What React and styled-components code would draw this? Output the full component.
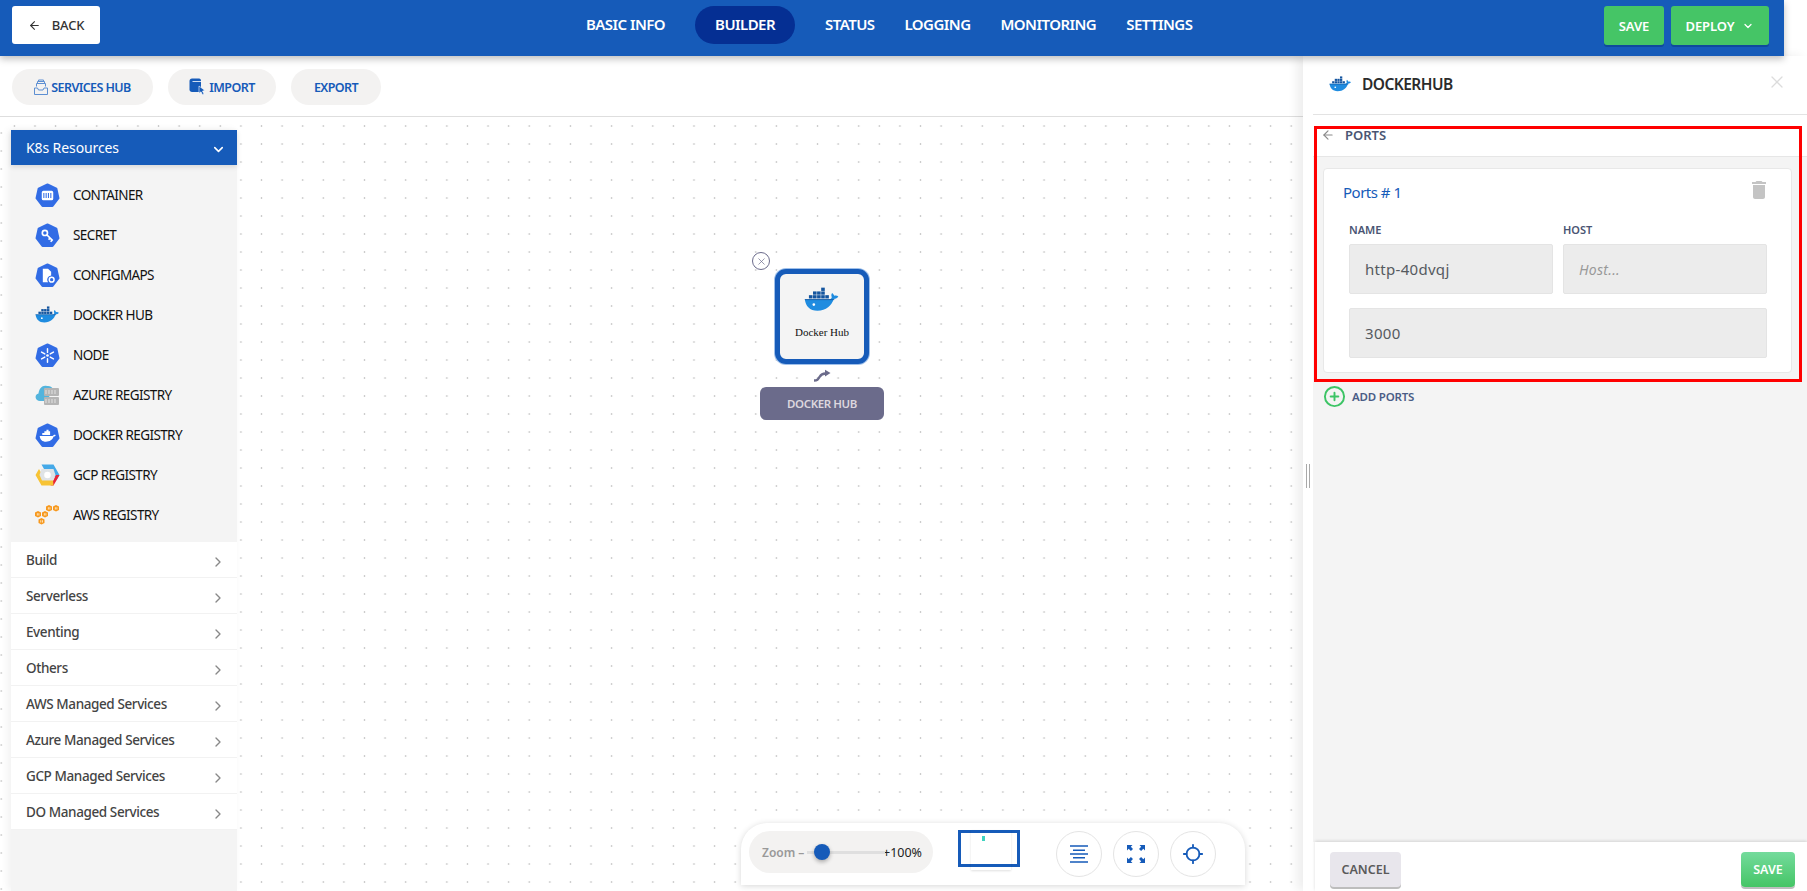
import React from 'react'
import styled, { createGlobalStyle } from 'styled-components'
import { ArrowLeft, ChevronDown, ChevronRight, X, CirclePlus, Locate } from 'lucide-react'
import { MdDelete } from 'react-icons/md'

const BLUE = '#165bb9'
const FONT = '"Noto Sans", "Open Sans", sans-serif'
const DOTS = 'radial-gradient(circle, #cbcbcb 0.85px, transparent 1.15px)'

const GlobalStyle = createGlobalStyle`
    html, body {
        margin: 0;
        height: 100%;
        overflow: hidden;
        background: #ffffff;
        font-family: ${FONT};
    }
    * {
        box-sizing: border-box;
    }
`

const Page = styled.div`
    width: 1807px;
    height: 891px;
    display: flex;
    flex-direction: column;
    overflow: hidden;
`

const Header = styled.header`
    position: relative;
    z-index: 5;
    flex: none;
    width: 1784px;
    height: 56px;
    padding: 6px 15px 0 12px;
    display: flex;
    align-items: flex-start;
    background: ${BLUE};
    box-shadow: 0 3px 7px rgba(0, 0, 0, 0.25);
`

const BackButton = styled.button`
    width: 88px;
    height: 38px;
    border: 0;
    border-radius: 3px;
    background: #ffffff;
    color: #333333;
    font: 500 13px ${FONT};
    letter-spacing: -0.2px;
    display: flex;
    align-items: center;
    justify-content: center;
    gap: 11px;
`

const Nav = styled.nav`
    margin-left: 486px;
    display: flex;
    gap: 30px;
`

const NavItem = styled.div`
    height: 38px;
    padding: 0 ${(p) => (p.$active ? '20px' : '0')};
    border-radius: 19px;
    background: ${(p) => (p.$active ? '#052f93' : 'transparent')};
    color: #ffffff;
    font-size: 15px;
    font-weight: 600;
    letter-spacing: -0.55px;
    line-height: 37px;
`

const Actions = styled.div`
    margin-left: auto;
    display: flex;
    gap: 7px;
`

const GreenButton = styled.button`
    width: ${(p) => p.$w}px;
    height: 39px;
    border: 0;
    border-radius: 3px;
    background: #45c566;
    box-shadow: 0 2px 0 #0f4a9c;
    color: #ffffff;
    font: 600 13px ${FONT};
    letter-spacing: -0.1px;
    display: flex;
    align-items: center;
    justify-content: center;
    gap: 8px;
`

const Main = styled.div`
    flex: 1;
    min-height: 0;
    display: flex;
`

const Workspace = styled.div`
    width: 1303px;
    display: flex;
    flex-direction: column;
`

const Toolbar = styled.div`
    flex: none;
    height: 61px;
    padding: 13px 12px 0;
    display: flex;
    align-items: flex-start;
    gap: 15px;
    border-bottom: 1px solid #dedede;
`

const PillButton = styled.button`
    width: ${(p) => p.$w}px;
    height: 36px;
    border: 0;
    border-radius: 18px;
    background: #f3f2f1;
    color: ${BLUE};
    font: 600 12.5px ${FONT};
    letter-spacing: -0.6px;
    display: flex;
    align-items: center;
    justify-content: center;
    gap: 3px;
`

const Canvas = styled.div`
    position: relative;
    flex: 1;
    min-height: 0;
    padding-top: 13px;
    display: flex;
    background-image: ${DOTS};
    background-size: 20.6px 18px;
    background-position: 4.1px 0;
`

const Strip = styled.div`
    flex: none;
    width: 11px;
    margin-top: -13px;
    background-color: #ffffff;
    background-image: ${DOTS};
    background-size: 20.6px 18px;
    background-position: -9.1px 7px;
`

const Sidebar = styled.aside`
    flex: none;
    width: 226px;
    display: flex;
    flex-direction: column;
    background: #f4f4f4;
    box-shadow: -3px 0 8px rgba(0, 0, 0, 0.06);
`

const SideHead = styled.div`
    flex: none;
    height: 35px;
    padding: 0 11px 0 15px;
    display: flex;
    align-items: center;
    justify-content: space-between;
    background: ${BLUE};
    color: #ffffff;
    font-size: 14px;
    letter-spacing: -0.1px;
    box-shadow: 0 2px 5px rgba(0, 0, 0, 0.12);

    svg {
        margin-top: 4px;
    }
`

const ResourceList = styled.div`
    padding: 10px 0 7px 24px;
`

const ResourceItem = styled.div`
    height: 40px;
    display: flex;
    align-items: center;
    gap: 13px;
    color: #111111;
    font-size: 13.5px;
    letter-spacing: -0.6px;
`

const IconSlot = styled.span`
    width: 25px;
    height: 26px;
    display: flex;
    align-items: center;
    justify-content: center;
`

const SectionRow = styled.div`
    height: 36px;
    padding: 0 11px 0 15px;
    display: flex;
    align-items: center;
    justify-content: space-between;
    background: #ffffff;
    border-bottom: 1px solid #f2f2f2;
    color: #444444;
    font-size: 13.5px;
    font-weight: 500;
    letter-spacing: -0.4px;

    svg {
        margin-top: 5px;
        color: #888888;
    }
`

const NodeGroup = styled.div`
    position: absolute;
    left: 760px;
    top: 135px;
    width: 124px;
    display: flex;
    flex-direction: column;
    align-items: center;
`

const NodeClose = styled.span`
    position: absolute;
    left: -8px;
    top: 0;
    width: 18px;
    height: 18px;
    border: 1px solid #6b6b8b;
    border-radius: 50%;
    display: flex;
    align-items: center;
    justify-content: center;
    color: #6b6b8b;
    background: #ffffff;
`

const NodeCard = styled.div`
    margin-top: 17px;
    width: 94px;
    height: 95px;
    border: 5px solid ${BLUE};
    border-radius: 11px;
    background: #f4f4f4;
    box-shadow: 0 0 0 1px #9fc0ea;
    display: flex;
    flex-direction: column;
    align-items: center;
    padding-top: 13px;
`

const NodeTitle = styled.div`
    margin-top: 14px;
    font: 11px "Liberation Serif", serif;
    color: #111111;
`

const Connector = styled.div`
    height: 23px;
    display: flex;
    align-items: center;
    justify-content: center;
`

const NodeLabel = styled.div`
    width: 124px;
    height: 33px;
    border-radius: 6px;
    background: #6b6b8b;
    color: #dcd6de;
    font-size: 11.5px;
    font-weight: 600;
    letter-spacing: -0.4px;
    display: flex;
    align-items: center;
    justify-content: center;
`

const ZoomBar = styled.div`
    position: absolute;
    left: 741px;
    bottom: 6px;
    width: 504px;
    height: 62px;
    padding: 8px 29px 0 8px;
    display: flex;
    align-items: flex-start;
    background: #ffffff;
    border-radius: 26px 26px 0 0;
    box-shadow: 0 1px 6px rgba(0, 0, 0, 0.16);
`

const ZoomPill = styled.div`
    width: 184px;
    height: 42px;
    padding: 0 11px 0 13px;
    border-radius: 21px;
    background: #f3f2f1;
    display: flex;
    align-items: center;
    font-size: 12px;
`

const ZoomLabel = styled.span`
    color: #999999;
    font-weight: 600;
    white-space: nowrap;
`

const Track = styled.div`
    position: relative;
    width: 81px;
    height: 3px;
    margin-left: 3px;
    background: #dfdfdf;
`

const Thumb = styled.span`
    position: absolute;
    left: 7px;
    top: -7px;
    width: 16px;
    height: 16px;
    border-radius: 50%;
    background: ${BLUE};
    box-shadow: 0 2px 4px rgba(0, 0, 0, 0.3);
`

const ZoomValue = styled.span`
    margin-left: -2px;
    color: #222222;
    font-size: 12.5px;
`

const MiniMap = styled.div`
    position: relative;
    margin: -1px 0 0 25px;
    width: 62px;
    height: 37px;
    border: 3px solid ${BLUE};
`

const MiniSheet = styled.div`
    position: absolute;
    left: 10px;
    top: -3px;
    width: 40px;
    height: 40px;
    box-shadow: 0 1px 2px rgba(0, 0, 0, 0.12);
`

const MiniDot = styled.span`
    position: absolute;
    left: 11px;
    top: 6px;
    width: 3px;
    height: 5px;
    background: #3fd3c0;
`

const RoundButtons = styled.div`
    margin-left: auto;
    display: flex;
    gap: 11px;
`

const RoundButton = styled.button`
    width: 46px;
    height: 46px;
    padding: 0;
    border: 1px solid #e4e4e4;
    border-radius: 50%;
    background: #ffffff;
    color: ${BLUE};
    display: flex;
    align-items: center;
    justify-content: center;
`

const Panel = styled.section`
    position: relative;
    z-index: 2;
    flex: 1;
    padding-left: 10px;
    display: flex;
    flex-direction: column;
    background: #ffffff;
    box-shadow: -6px 0 10px rgba(0, 0, 0, 0.07);
`

const Handle = styled.span`
    position: absolute;
    left: 3px;
    top: 408px;
    width: 4px;
    height: 24px;
    border-left: 1px solid #a9a9a9;
    border-right: 1px solid #a9a9a9;
`

const PanelHead = styled.div`
    flex: none;
    height: 59px;
    padding: 0 20px 2px 16px;
    display: flex;
    align-items: center;
    border-bottom: 1px solid #e3e3e3;
`

const PanelTitle = styled.h2`
    margin: 0 0 0 10px;
    color: #2b2b2b;
    font-size: 15.5px;
    font-weight: 600;
    letter-spacing: -0.55px;
`

const PanelClose = styled.span`
    margin: -4px 0 0 auto;
    color: #dcdcdc;
    display: flex;
`

const PanelBody = styled.div`
    flex: 1;
    min-height: 0;
    background: #f4f4f4;
`

const SubHead = styled.div`
    height: 42px;
    padding: 0 0 2px 8px;
    display: flex;
    align-items: center;
    gap: 10px;
    background: #ffffff;
    border-bottom: 1px solid #e6e6e6;
    color: #4a5573;
    font-size: 13px;
    font-weight: 600;

    svg {
        color: #8a8a8a;
    }
`

const Card = styled.div`
    height: 205px;
    margin: 11px 15px 0 10px;
    border: 1px solid #e8e8e8;
    border-radius: 4px;
    background: #ffffff;
`

const CardHead = styled.div`
    height: 50px;
    padding: 0 24px 4px 19px;
    display: flex;
    align-items: center;
    justify-content: space-between;
`

const CardTitle = styled.div`
    color: ${BLUE};
    font-size: 15px;
    letter-spacing: -0.5px;
`

const TrashIcon = styled.span`
    margin: -4px -4px 0 0;
    color: #c4c4c4;
    display: flex;
`

const FieldGrid = styled.div`
    padding: 0 24px 0 25px;
    display: grid;
    grid-template-columns: 1fr 1fr;
    column-gap: 10px;
    row-gap: 14px;
`

const Field = styled.div`
    grid-column: ${(p) => (p.$full ? '1 / -1' : 'auto')};
`

const FieldLabel = styled.label`
    display: block;
    height: 25px;
    color: #4a5573;
    font-size: 11px;
    font-weight: 600;
    line-height: 21px;
`

const Input = styled.input`
    display: block;
    width: 100%;
    height: 50px;
    padding: 0 15px;
    border: 1px solid #e4e4e4;
    border-radius: 2px;
    outline: none;
    background: #ececec;
    color: #555a60;
    font: 15px ${FONT};
    letter-spacing: 0.3px;

    &::placeholder {
        color: #999999;
        font-size: 14px;
        font-style: italic;
    }
`

const AddRow = styled.div`
    margin: 13px 0 0 10px;
    height: 20px;
    display: flex;
    align-items: center;
    gap: 6px;
    color: #4a5d86;
    font-size: 11.5px;
    font-weight: 600;
    letter-spacing: -0.2px;

    svg {
        color: #3cc465;
    }
`

const Footer = styled.div`
    flex: none;
    height: 49px;
    margin-left: 2px;
    padding: 10px 12px 0 15px;
    display: flex;
    align-items: flex-start;
    justify-content: space-between;
    background: #ffffff;
    box-shadow: 0 -1px 3px rgba(0, 0, 0, 0.14);
`

const CancelButton = styled.button`
    width: 71px;
    height: 35px;
    border: 0;
    border-radius: 4px;
    background: #e8e6ec;
    box-shadow: 0 2px 0 #bdbdbd;
    color: #5a5a5a;
    font: 600 12.5px ${FONT};
`

const SaveButton = styled.button`
    width: 54px;
    height: 35px;
    border: 0;
    border-radius: 4px;
    background: linear-gradient(180deg, #74db9c, #45c566);
    box-shadow: 0 2px 0 #bdbdbd;
    color: #ffffff;
    font: 600 12.5px ${FONT};
`

const Highlight = styled.div`
    position: absolute;
    left: 11px;
    top: 70px;
    width: 488px;
    height: 256px;
    border: 3px solid #ff0000;
    pointer-events: none;
`

const Hept = ({ children, size = 25 }) => (
    <svg width={size} height={size} viewBox="0 0 24 24">
        <polygon
            points="12,1.5 20.5,5.5 22.5,14.5 16.8,22 7.2,22 1.5,14.5 3.5,5.5"
            fill="#326ce5"
            stroke="#326ce5"
            strokeWidth="2"
            strokeLinejoin="round"
        />
        {children}
    </svg>
)

const DockerWhale = ({ width = 30, shade = '#1f8ce0', dark = '#14559f' }) => (
    <svg width={width} height={(width * 30) / 44} viewBox="0 0 44 30">
        <g fill={dark}>
            <rect x="6" y="10" width="4.4" height="4" />
            <rect x="11" y="10" width="4.4" height="4" />
            <rect x="16" y="10" width="4.4" height="4" />
            <rect x="21" y="10" width="4.4" height="4" />
            <rect x="26" y="10" width="4.4" height="4" />
            <rect x="11" y="5.4" width="4.4" height="4" />
            <rect x="16" y="5.4" width="4.4" height="4" />
            <rect x="21" y="5.4" width="4.4" height="4" />
            <rect x="21" y="0.8" width="4.4" height="4" />
        </g>
        <path
            d="M1 15h30c1.5-.2 2.7-1 3-2.8-.8-1.4-.8-3.4.4-5 1.5 1 2.3 2.3 2.5 3.6 1.8-.6 3.8-.3 5.1.9-1 2-3.2 3-5.6 3C34 22.500 27 29 16.500 29 7 29 2 23.500 1 15z"
            fill={shade}
        />
        <rect x="1" y="15" width="36" height="1" fill={dark} />
        <circle cx="12" cy="21.500" r="1.600" fill="#ffffff" />
    </svg>
)

const ContainerIcon = () => (
    <Hept>
        <rect x="6.500" y="7.500" width="11" height="9" rx="1.500" fill="#ffffff" />
        <path d="M8.500 9.500v5M10.700 9.500v5M12.900 9.500v5M15.200 9.500v5" stroke="#326ce5" strokeWidth="1" />
    </Hept>
)

const SecretIcon = () => (
    <Hept>
        <circle cx="9.500" cy="9.500" r="2.500" fill="none" stroke="#ffffff" strokeWidth="1.600" />
        <path d="M11.300 11.300l5.700 5.700M14.500 14.500l-1.500 1.500M16.500 16.500l-1.500 1.500" stroke="#ffffff" strokeWidth="1.600" />
    </Hept>
)

const ConfigIcon = () => (
    <Hept>
        <path d="M7.500 5.500h5l3 3v3.500a4 4 0 0 0-3 6.500h-5z" fill="#ffffff" />
        <circle cx="16" cy="16" r="2.300" fill="none" stroke="#ffffff" strokeWidth="1.400" />
    </Hept>
)

const NodeIcon = () => (
    <Hept>
        <g stroke="#ffffff" strokeWidth="1.400" strokeLinecap="round">
            <path d="M12 5.500v3.500M12 15v3.500M6.300 8.700l3.100 1.800M14.600 13.500l3.100 1.800M6.300 15.300l3.100-1.800M14.600 10.500l3.100-1.800" />
        </g>
        <circle cx="12" cy="12" r="1.300" fill="#ffffff" />
    </Hept>
)

const DockerRegistryIcon = () => (
    <Hept>
        <path
            d="M4.500 12.500h12c.7 0 1.200-.4 1.400-1 .7-.3 1.500-.2 2 .2-.4.9-1.200 1.300-2 1.300-1 3-3.800 5-7.400 5-3.400 0-5.600-2-6-5.500z"
            fill="#ffffff"
        />
        <path d="M7 11.500V9.500h2V8h2V6.500h2V8h1.500v3.500z" fill="#ffffff" />
    </Hept>
)

const AzureIcon = () => (
    <svg width="25" height="24" viewBox="0 0 25 24">
        <path d="M2 17c-2.500-2-1.500-6 1.500-6.500C4 5 8 1.500 12 3c2-.5 5 .5 6 3l-6 12H5c-1.200 0-2.200-.4-3-1z" fill="#53b4dd" />
        <g fill="#b5b5b5">
            <rect x="9" y="5" width="15" height="8" rx="1" />
            <rect x="9" y="14" width="15" height="8" rx="1" />
        </g>
        <path d="M11 7v4M14 7v4M17 7v4M20 7v4M11 16v4M14 16v4M17 16v4M20 16v4" stroke="#e2e2e2" strokeWidth="1" />
    </svg>
)

const GcpIcon = () => (
    <svg width="25" height="22" viewBox="0 0 25 22">
        <path d="M6.500 0.500h12L24.500 11l-3 5.500-4-7-2.500-4.500H9z" fill="#45a9e8" />
        <path d="M24.500 11l-6 10.500h-3l3-5.500 2.500-5z" fill="#ea2436" />
        <path d="M18.500 21.500h-12L0.500 11 4 5l4 7 2 4h8z" fill="#f7c334" />
        <path d="M6.500 5h12l2 6-2.500 5.500H7L4.500 11z" fill="#dfe3e6" />
        <circle cx="12.500" cy="11" r="3.300" fill="#ffffff" />
    </svg>
)

const Cube = ({ x, y }) => (
    <g transform={`translate(${x} ${y})`}>
        <path d="M0 1.600L3 0l3 1.600v3.300L3 6.500 0 4.900z" fill="#f7981d" />
        <path d="M1.900 2.200h.8v2.400h-.8zM3.500 2.200h.8v2.400h-.8z" fill="#fff3dc" />
    </g>
)

const AwsIcon = () => (
    <svg width="25" height="20" viewBox="0 0 25 20">
        <Cube x="11" y="0" />
        <Cube x="18" y="0" />
        <Cube x="0" y="6" />
        <Cube x="7" y="6" />
        <Cube x="3.500" y="13" />
    </svg>
)

const HubIcon = () => (
    <svg width="14" height="16" viewBox="0 0 14 16" fill="none" stroke="#5d8fd2" strokeWidth="1">
        <path d="M0.500 9v6.500h13V9h-3.500l-1 2H4.500l-1-2z" />
        <path d="M2.500 7.500v-3h9v3M3.500 4.500v-2h7v2M4.500 2.500V1h5v1.500" />
    </svg>
)

const ImportIcon = () => (
    <svg width="17" height="18" viewBox="0 0 17 18">
        <path d="M0.500 3c0-1.500 1-2.500 2.500-2.500h7c1.500 0 2 1 2 2.500v11H3c-1.500 0-2.500-1-2.500-2.500z" fill="#165bb9" />
        <path d="M3.500 3.500h9" stroke="#ffffff" strokeWidth="0.800" />
        <path d="M10 8l6 4.500-2.500.5 1.500 3-1.500.8-1.500-3-2 1.500z" fill="#165bb9" stroke="#ffffff" strokeWidth="0.600" />
    </svg>
)

const LinkIcon = () => (
    <svg width="18" height="13" viewBox="0 0 18 13" fill="none">
        <path d="M1 11.500c3.500 0 4-1 5.500-3.500s2.500-3.500 6-3.500" stroke="#6b6b8b" strokeWidth="2.400" />
        <path d="M12 0.800l5.500 3.200L12 7.500z" fill="#6b6b8b" />
    </svg>
)

const AlignIcon = () => (
    <svg width="18" height="18" viewBox="0 0 18 18" fill="none" stroke="currentColor" strokeWidth="1.600">
        <path d="M0 1h18M3 5.300h12M0 9h18M3 12.700h12M0 17h18" />
    </svg>
)

const ExpandIcon = () => (
    <svg width="18" height="18" viewBox="0 0 18 18" fill="currentColor">
        <path d="M0 0h5.500L3.800 1.700 6 3.900 3.900 6 1.700 3.800 0 5.500z" />
        <path d="M18 0v5.500l-1.700-1.700L14.100 6 12 3.900l2.200-2.200L12.500 0z" />
        <path d="M0 18v-5.500l1.700 1.700L3.900 12 6 14.100l-2.200 2.200L5.500 18z" />
        <path d="M18 18h-5.500l1.700-1.700L12 14.100l2.100-2.100 2.200 2.200 1.700-1.700z" />
    </svg>
)

const resources = [
    { name: 'CONTAINER', icon: <ContainerIcon /> },
    { name: 'SECRET', icon: <SecretIcon /> },
    { name: 'CONFIGMAPS', icon: <ConfigIcon /> },
    { name: 'DOCKER HUB', icon: <DockerWhale width={25} /> },
    { name: 'NODE', icon: <NodeIcon /> },
    { name: 'AZURE REGISTRY', icon: <AzureIcon /> },
    { name: 'DOCKER REGISTRY', icon: <DockerRegistryIcon /> },
    { name: 'GCP REGISTRY', icon: <GcpIcon /> },
    { name: 'AWS REGISTRY', icon: <AwsIcon /> },
]

const sections = [
    'Build',
    'Serverless',
    'Eventing',
    'Others',
    'AWS Managed Services',
    'Azure Managed Services',
    'GCP Managed Services',
    'DO Managed Services',
]

const tabs = ['BASIC INFO', 'BUILDER', 'STATUS', 'LOGGING', 'MONITORING', 'SETTINGS']

const App = () => {
    return (
        <Page>
            <GlobalStyle />
            <Header>
                <BackButton>
                    <ArrowLeft size={13} strokeWidth={2} />
                    BACK
                </BackButton>
                <Nav>
                    {tabs.map((tab) => (
                        <NavItem key={tab} $active={tab === 'BUILDER'}>
                            {tab}
                        </NavItem>
                    ))}
                </Nav>
                <Actions>
                    <GreenButton $w={60}>SAVE</GreenButton>
                    <GreenButton $w={98}>
                        DEPLOY
                        <ChevronDown size={12} strokeWidth={2.5} />
                    </GreenButton>
                </Actions>
            </Header>
            <Main>
                <Workspace>
                    <Toolbar>
                        <PillButton $w={141}>
                            <HubIcon />
                            SERVICES HUB
                        </PillButton>
                        <PillButton $w={108}>
                            <ImportIcon />
                            IMPORT
                        </PillButton>
                        <PillButton $w={90}>EXPORT</PillButton>
                    </Toolbar>
                    <Canvas>
                        <Strip />
                        <Sidebar>
                            <SideHead>
                                K8s Resources
                                <ChevronDown size={15} strokeWidth={2.5} />
                            </SideHead>
                            <ResourceList>
                                {resources.map((item) => (
                                    <ResourceItem key={item.name}>
                                        <IconSlot>{item.icon}</IconSlot>
                                        {item.name}
                                    </ResourceItem>
                                ))}
                            </ResourceList>
                            {sections.map((name) => (
                                <SectionRow key={name}>
                                    {name}
                                    <ChevronRight size={16} />
                                </SectionRow>
                            ))}
                        </Sidebar>
                        <NodeGroup>
                            <NodeClose>
                                <X size={11} strokeWidth={1.5} />
                            </NodeClose>
                            <NodeCard>
                                <DockerWhale width={36} />
                                <NodeTitle>Docker Hub</NodeTitle>
                            </NodeCard>
                            <Connector>
                                <LinkIcon />
                            </Connector>
                            <NodeLabel>DOCKER HUB</NodeLabel>
                        </NodeGroup>
                        <ZoomBar>
                            <ZoomPill>
                                <ZoomLabel>Zoom –</ZoomLabel>
                                <Track>
                                    <Thumb />
                                </Track>
                                <ZoomValue>+100%</ZoomValue>
                            </ZoomPill>
                            <MiniMap>
                                <MiniSheet>
                                    <MiniDot />
                                </MiniSheet>
                            </MiniMap>
                            <RoundButtons>
                                <RoundButton>
                                    <AlignIcon />
                                </RoundButton>
                                <RoundButton>
                                    <ExpandIcon />
                                </RoundButton>
                                <RoundButton>
                                    <Locate size={22} strokeWidth={2} />
                                </RoundButton>
                            </RoundButtons>
                        </ZoomBar>
                    </Canvas>
                </Workspace>
                <Panel>
                    <Handle />
                    <PanelHead>
                        <DockerWhale width={23} />
                        <PanelTitle>DOCKERHUB</PanelTitle>
                        <PanelClose>
                            <X size={20} strokeWidth={1.5} />
                        </PanelClose>
                    </PanelHead>
                    <PanelBody>
                        <SubHead>
                            <ArrowLeft size={14} strokeWidth={2} />
                            PORTS
                        </SubHead>
                        <Card>
                            <CardHead>
                                <CardTitle>Ports # 1</CardTitle>
                                <TrashIcon>
                                    <MdDelete size={24} />
                                </TrashIcon>
                            </CardHead>
                            <FieldGrid>
                                <Field>
                                    <FieldLabel>NAME</FieldLabel>
                                    <Input readOnly value="http-40dvqj" />
                                </Field>
                                <Field>
                                    <FieldLabel>HOST</FieldLabel>
                                    <Input readOnly placeholder="Host..." />
                                </Field>
                                <Field $full>
                                    <Input readOnly value="3000" />
                                </Field>
                            </FieldGrid>
                        </Card>
                        <AddRow>
                            <CirclePlus size={23} strokeWidth={2} />
                            ADD PORTS
                        </AddRow>
                    </PanelBody>
                    <Footer>
                        <CancelButton>CANCEL</CancelButton>
                        <SaveButton>SAVE</SaveButton>
                    </Footer>
                    <Highlight />
                </Panel>
            </Main>
        </Page>
    )
}

export default App
